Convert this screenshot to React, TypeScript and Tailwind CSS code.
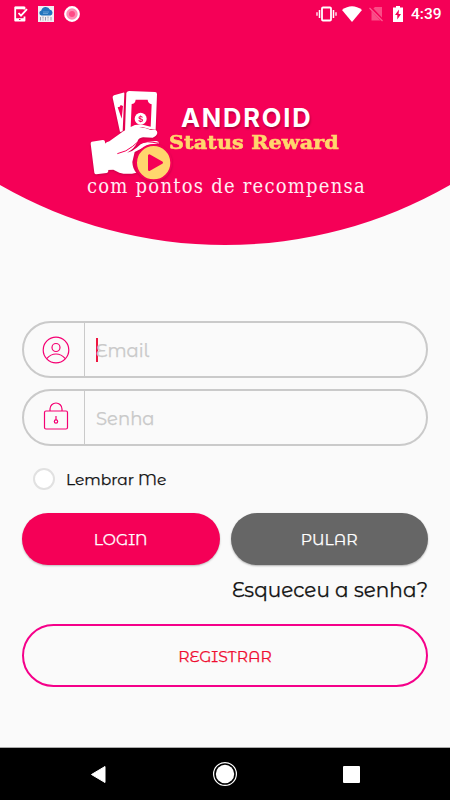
import React from "react";

function StatusBar() {
  return (
    <div className="flex h-[27px] items-center justify-between pl-[14px] pr-[8px]">
      <div className="flex items-center gap-[10px]">
        <svg width="14" height="16" viewBox="0 0 14 16" fill="none" stroke="#fff">
          <path d="M10.5 3.5V1.3H1.2v13.2h9.3V10.5" strokeWidth="1.8" strokeLinejoin="round" />
          <path d="M1 2h9M1 13.5h9.5" strokeWidth="2.6" />
          <path d="M4.5 7l2.5 2.7L13 3.2" strokeWidth="1.8" />
          <path d="M5 13.5h1.5" stroke="#f50057" strokeWidth="1" />
        </svg>
        <svg width="16" height="16" viewBox="0 0 16 16">
          <path d="M0 0h16v16H0z" fill="#f1eef3" />
          <path d="M3.5 9.5a2.6 2.6 0 0 1-.2-5.1A4.7 4.7 0 0 1 12 3.7a3 3 0 0 1 .5 5.8z" fill="#2274bd" />
          <path d="M5 6h6M5 7.5h5" stroke="#79afe0" strokeWidth=".7" />
          <path d="M2.5 11v3.5M5 10.5v2m0 1v1M7.5 11v3.5M10 10.5v2m0 1v1M13 11v3.5" stroke="#8d8698" strokeWidth=".8" />
        </svg>
        <svg width="16" height="16" viewBox="0 0 16 16">
          <circle cx="8" cy="8" r="6.8" fill="#ff8db5" stroke="#fff" strokeWidth="2.2" />
          <circle cx="8" cy="8" r="3" fill="#ff4a86" />
        </svg>
      </div>
      <div className="flex items-center">
        <svg width="21" height="16" viewBox="0 0 21 16" fill="none" stroke="#fff">
          <rect x="6" y="1.5" width="9" height="13" rx="1" strokeWidth="1.8" />
          <path d="M3.5 4v8M17.5 4v8" strokeWidth="1.5" />
          <path d="M1 6.2v3.6M20 6.2v3.6" strokeWidth="1.3" />
        </svg>
        <svg className="ml-[5px]" width="20" height="16" viewBox="0 0 20 16">
          <path d="M0 4Q10-3.5 20 4L10 16z" fill="#fff" />
        </svg>
        <svg className="ml-[7px]" width="15" height="16" viewBox="0 0 15 16">
          <path d="M2.5 4L6 1h7v13.5H2.5z" fill="#fa4d87" />
          <path d="M1 1l13 14" stroke="#f50057" strokeWidth="3" />
          <path d="M.5 2l13 13" stroke="#fb5e93" strokeWidth="1.2" />
        </svg>
        <svg className="ml-[9px]" width="10" height="16" viewBox="0 0 10 16">
          <path d="M0 1.5h3V0h4v1.5h3V16H0z" fill="#fff" />
          <path d="M6 3.5L2 9h2.3v4.5L8 8H5.6z" fill="#f50057" />
        </svg>
        <span className="ml-[8px] w-[31px] whitespace-nowrap font-['Roboto',sans-serif] text-[15.5px] leading-[20px] font-medium text-white">4:39</span>
      </div>
    </div>
  );
}

function HandLogo() {
  return (
    <svg className="h-[92px] w-[82px] shrink-0 drop-shadow-[0_1px_1px_rgba(0,0,0,.18)]" viewBox="30 30 246 276">
      <g fill="#fff">
        <path d="M98 53q-1-5 4-7l27-8q5-1 4 4l-5 112-8 2z" />
        <path d="M139 39q1-5 8-6l78 3q6 0 6 7l-4 106q-17 0-40-8-23 0-36 10l-16 3z" />
        <path d="M35 185l33-5q6-1 7 5l10 88q0 5-5 6l-31 4q-5 0-6-5l-11-87q0-5 3-6z" />
        <path d="M88 184l42-30q21-15 47-13 19 2 36 9l13-1q6 3 6 10-2 10-14 14l-29-1q-13 1-17 13-7 20-31 33 17-4 29-15l12-10q20-10 47-10 8 1 8 8l-33 5-40 20-7 30q1 21 12 32-26 7-51 0l-18-9-17 1q-5-1-5-7l-7-62q-1-11 17-17z" />
      </g>
      <path d="M129 78l-4 38-12-34q8 0 9-7z" fill="#f50057" />
      <path d="M155 72q10 0 12-13h36q1 11 12 14l-3 67-24-6q-22-2-36 7z" fill="#f50057" />
      <circle cx="182" cy="116" r="18" fill="#fff" />
      <text x="182" y="125" textAnchor="middle" fontFamily="Liberation Sans, sans-serif" fontSize="26" fontWeight="700" fill="#f50057">$</text>
      <path d="M172 193q22-14 64-3" fill="none" stroke="#f50057" strokeWidth="3.5" />
      <path d="M112 221q28-6 46-22l14-12" fill="none" stroke="#f50057" strokeWidth="3" />
      <circle cx="221" cy="248" r="53" fill="#ffd66d" stroke="#f50057" strokeWidth="6" />
      <path d="M208 227v42l37-21z" fill="#f50057" stroke="#f50057" strokeWidth="8" strokeLinejoin="round" />
    </svg>
  );
}

function Field({ icon, label, focused = false }: { icon: React.ReactNode; label: string; focused?: boolean }) {
  return (
    <label className="flex h-[57px] overflow-hidden rounded-full border-2 border-[#cacaca] text-[#c9c9c9]">
      <span className="flex w-[61px] shrink-0 items-center justify-center border-r border-[#cacaca] pl-[4px]">{icon}</span>
      <span className="flex items-center pl-[11px] text-[18px] [-webkit-text-stroke:.25px]">
        {focused && <i className="-mr-[2px] h-[24px] w-[2px] bg-[#ed1740]" />}
        <span className="pt-[3px]">{label}</span>
      </span>
    </label>
  );
}

export default function App() {
  return (
    <main className="flex h-[800px] w-[450px] flex-col overflow-hidden bg-[#fafafa] font-['Montserrat_Alternates','Montserrat','Inter',sans-serif] text-[#111]">
      <header className="h-[245px] shrink-0 bg-[#f50057] [clip-path:path('M0_0H450V185A452_452_0_0_1_0_185Z')]">
        <StatusBar />
        <div className="mt-[63px] ml-[90px] flex h-[84px]">
          <HandLogo />
          <div className="-ml-[3px] pt-[15px]">
            <div className="ml-[12px] font-['Inter','Liberation_Sans',sans-serif] text-[25.5px] leading-[26px] font-bold tracking-[1.8px] text-white [text-shadow:1px_2px_2px_rgba(0,0,0,.25)]">ANDROID</div>
            <div className="origin-left scale-x-[1.09] whitespace-nowrap font-['DejaVu_Serif',serif] text-[19px] leading-[23px] font-bold tracking-[.1px] text-[#ffd66d] [-webkit-text-stroke:.6px_#ffd66d]">Status Reward</div>
          </div>
        </div>
        <div className="ml-[87px] whitespace-nowrap font-['DejaVu_Serif_Condensed','DejaVu_Serif',serif] text-[20px] leading-[24px] tracking-[1.23px] text-[#ffedf3]">com pontos de recompensa</div>
      </header>

      <section className="mt-[76px] flex flex-col gap-[11px] px-[22px]">
        <Field
          label="Email"
          focused
          icon={
            <svg width="28" height="28" viewBox="0 0 28 28" fill="none" stroke="#f50073" strokeWidth="1.2">
              <circle cx="14" cy="14" r="12.8" />
              <circle cx="14" cy="11.5" r="4" />
              <path d="M4.7 22.6q4-4.6 9.3-4.6t9.3 4.6" />
            </svg>
          }
        />
        <Field
          label="Senha"
          icon={
            <svg className="-mt-[3px]" width="26" height="30" viewBox="0 0 26 30" fill="none" stroke="#f50073" strokeWidth="1.2">
              <rect x="1.5" y="10" width="23" height="18" rx="1.5" />
              <path d="M7 10V8a6 6 0 0 1 12 0v2M13 15v4" />
              <circle cx="13" cy="20.5" r="1.7" />
            </svg>
          }
        />
      </section>

      <div className="mt-[22px] flex h-[22px] items-center pl-[33px]">
        <span className="size-[22px] rounded-full border-2 border-[#e1e1e1] bg-white" />
        <span className="ml-[11px] pt-[2px] text-[15.5px] [-webkit-text-stroke:.25px]">Lembrar Me</span>
      </div>

      <div className="mt-[23px] grid shrink-0 grid-cols-2 gap-[11px] px-[22px] text-[15.7px] text-white [-webkit-text-stroke:.25px]">
        <button className="h-[52px] rounded-full bg-[#f50057] pt-[2px] shadow-[0_1px_2px_rgba(0,0,0,.25)]">LOGIN</button>
        <button className="h-[52px] rounded-full bg-[#666] pt-[2px] shadow-[0_1px_2px_rgba(0,0,0,.3)]">PULAR</button>
      </div>
      <a className="mt-[10px] mr-[22px] self-end text-[20px] leading-[30px] [-webkit-text-stroke:.25px]">Esqueceu a senha?</a>
      <button className="mx-[22px] mt-[19px] h-[63px] shrink-0 rounded-full border-2 border-[#f5008a] pt-[2px] text-[15.6px] text-[#ef0c30] [-webkit-text-stroke:.25px]">REGISTRAR</button>

      <nav className="mt-auto flex h-[53px] shrink-0 items-center border-t border-[#aaa] bg-black">
        <svg className="ml-[90px]" width="16" height="19" viewBox="0 0 16 19">
          <path d="M15 1.5v16L1.5 9.5z" fill="#fff" stroke="#fff" strokeLinejoin="round" />
        </svg>
        <svg className="ml-[106px]" width="26" height="26" viewBox="0 0 26 26">
          <circle cx="13" cy="13" r="11.4" fill="none" stroke="#fff" strokeWidth="1.2" />
          <circle cx="13" cy="13" r="9.2" fill="#fff" />
        </svg>
        <span className="ml-[105px] size-[17px] rounded-[1px] bg-white" />
      </nav>
    </main>
  );
}
